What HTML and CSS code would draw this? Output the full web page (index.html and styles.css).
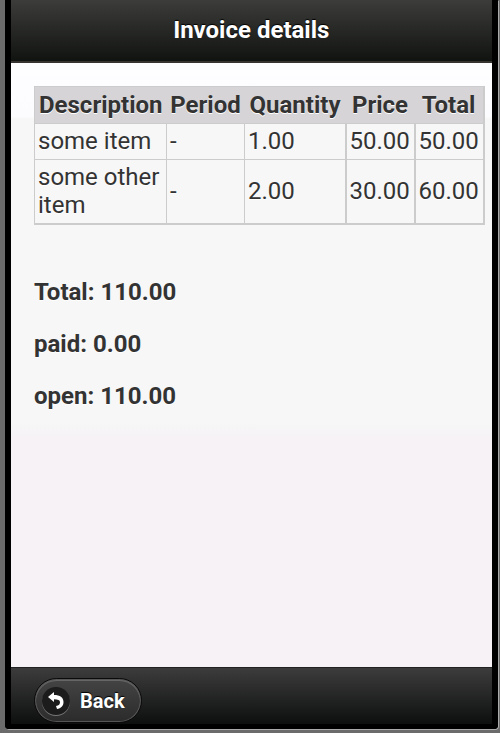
FILE: index.html
```html
<!DOCTYPE html>
<html lang="en">
  <head>
    <meta charset="utf-8">
    <meta name="viewport" content="width=device-width, initial-scale=1">
    <title>Invoice details</title>
    <link rel="stylesheet" href="styles.css">
  </head>
  <body>
    <div class="page">
      <header class="header">
        <h1>Invoice details</h1>
      </header>
      <main class="content">
        <table class="invoice">
          <colgroup>
            <col class="col-description">
            <col class="col-period">
            <col class="col-quantity">
            <col class="col-price">
            <col class="col-total">
          </colgroup>
          <thead>
            <tr>
              <th>Description</th>
              <th>Period</th>
              <th>Quantity</th>
              <th>Price</th>
              <th>Total</th>
            </tr>
          </thead>
          <tbody>
            <tr>
              <td>some item</td>
              <td>-</td>
              <td>1.00</td>
              <td class="amount">50.00</td>
              <td class="amount">50.00</td>
            </tr>
            <tr>
              <td>some other item</td>
              <td>-</td>
              <td>2.00</td>
              <td class="amount">30.00</td>
              <td class="amount">60.00</td>
            </tr>
          </tbody>
        </table>
        <div class="summary">
          <p>Total: 110.00</p>
          <p>paid: 0.00</p>
          <p>open: 110.00</p>
        </div>
      </main>
      <footer class="footer">
        <button type="button" class="back">
          <span class="back-icon">
            <svg width="28" height="28" viewBox="0 0 28 28" aria-hidden="true">
              <path d="M6 10 L12 5 V8 C18 8 21.500 10.500 21.500 15 C21.500 19 19 21.500 15 22 L14 19 C17 18.500 18 17 18 15.200 C18 13.200 16 12.300 12 12.300 V15 Z" fill="#fff"/>
            </svg>
          </span>
          Back
        </button>
      </footer>
    </div>
  </body>
</html>
```

FILE: styles.css
```css
body {
  display: flex;
  box-sizing: border-box;
  min-height: 100vh;
  margin: 0;
  padding: 0 3px 4px 5px;
  background: #6b6b6b;
  color: #333;
  font-family: Roboto, "Liberation Sans", sans-serif;
  font-size: 24px;
  line-height: 28px;
}

/* phone bezel */
.page {
  display: flex;
  flex: 1;
  flex-direction: column;
  border: solid #000;
  border-width: 0 6px 5px;
  border-radius: 0 0 4px 4px;
  box-shadow: 1px 1px 0 #aaa;
}

.header {
  padding: 16px 0 17px;
  border-bottom: 2px solid #37332f;
  background: linear-gradient(#3c3d3b, #111311);
}

h1 {
  margin: 0;
  color: #fff;
  font-size: 24px;
  text-align: center;
  text-shadow: 0 -1px 1px #000;
}

.content {
  flex: 1;
  padding: 23px 7px 23px 23px;
  background: linear-gradient(#fefdff 0, #fcfbfd 54px, #f7f7f7 56px, #f7f7f7 360px, #f6f2f6 375px);
  text-shadow: 0 1px 0 #fff;
}

.invoice {
  width: 100%;
  table-layout: fixed;
  border-collapse: collapse;
  border: solid #ccc;
  border-width: 1px 2px 2px 1px;
}

.col-description {
  width: 132px;
}

.col-period {
  width: 78px;
}

.col-quantity {
  width: 101px;
}

.col-price,
.col-total {
  width: 69px;
}

th {
  padding: 4px 0;
  background: #d6d4d7;
}

td {
  padding: 3px 3px 4px;
  border: 1px solid #ccc;
}

.amount {
  border-left-width: 2px;
}

.summary {
  margin-top: 53px;
  font-weight: bold;
}

.summary p {
  margin: 0 0 24px;
}

.footer {
  padding: 10px 23px 1px;
  border-top: 1px solid #222;
  background: linear-gradient(#3c3c3c, #0d0f0e);
}

.back {
  display: flex;
  align-items: center;
  gap: 10px;
  height: 45px;
  padding: 0 16px 0 7px;
  border: 1px solid #0a0a0a;
  border-radius: 23px;
  background: linear-gradient(#444, #2b2b2b);
  box-shadow: inset 0 0 0 1px #555, inset 0 1px 0 1px #666;
  color: #fff;
  font: bold 20px/24px Roboto, "Liberation Sans", sans-serif;
  text-shadow: 0 -1px 1px #000;
}

.back-icon {
  display: flex;
  border-radius: 50%;
  background: #1c1c1c;
  box-shadow: 0 1px 0 #777;
}
```
